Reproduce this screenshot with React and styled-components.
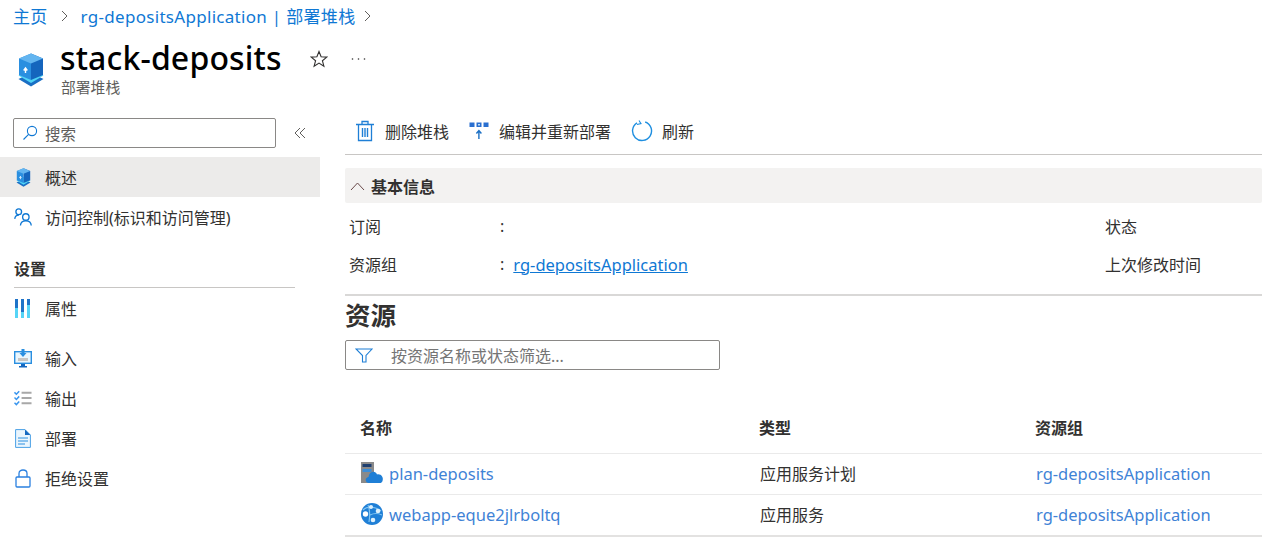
import React from 'react';
import styled, { createGlobalStyle } from 'styled-components';

const Global = createGlobalStyle`
  html, body {
    margin: 0;
    padding: 0;
    background: #fff;
    overflow: hidden;
    font-family: "Noto Sans", "Noto Sans CJK SC", sans-serif;
    color: #323130;
  }
`;

const Page = styled.div`
  width: 1262px;
  height: 550px;
  overflow: hidden;
`;

const Breadcrumb = styled.nav`
  display: flex;
  align-items: center;
  height: 31px;
  padding-left: 13px;
  font-size: 17px;
  color: #0f78d4;
  white-space: nowrap;
`;

const Crumb = styled.span`
  letter-spacing: 0.3px;
`;

const CrumbSep = styled.svg`
  width: 9px;
  height: 14px;
  margin: 0 ${p => p.$gap || 12}px;
  fill: none;
  stroke: #605e5c;
  stroke-width: 1;
`;

const TitleRow = styled.header`
  display: flex;
  height: 66px;
  margin-top: 4px;
  padding-left: 18px;
`;

const TitleIcon = styled.div`
  width: 26px;
  margin-top: 18px;
`;

const TitleText = styled.div`
  margin-left: 16px;
  width: 250px;
`;

const Title = styled.h1`
  margin: 0;
  font-size: 32px;
  font-weight: 500;
  line-height: 46px;
  letter-spacing: 0.15px;
  color: #000;
`;

const SubTitle = styled.div`
  font-size: 14.8px;
  line-height: 13px;
  color: #605e5c;
  margin-left: 1px;
`;

const TitleActions = styled.div`
  display: flex;
  align-items: flex-start;
  padding-top: 15px;
  gap: 23px;
`;

const Columns = styled.div`
  display: flex;
`;

const Sidebar = styled.aside`
  width: 320px;
  flex-shrink: 0;
  padding-top: 17px;
`;

const SearchRow = styled.div`
  display: flex;
  align-items: center;
  padding-left: 13px;
  height: 30px;
  margin-bottom: 9px;
`;

const SearchBox = styled.div`
  display: flex;
  align-items: center;
  gap: 7px;
  box-sizing: border-box;
  width: 263px;
  height: 30px;
  padding-left: 8px;
  border: 1px solid #8a8886;
  border-radius: 2px;
  font-size: 15.5px;
  color: #605e5c;
`;

const Collapse = styled.svg`
  width: 12px;
  height: 12px;
  margin-left: 18px;
  fill: none;
  stroke: #605e5c;
  stroke-width: 1;
`;

const NavItem = styled.div`
  display: flex;
  align-items: center;
  height: 40px;
  padding-left: 14px;
  gap: 13px;
  font-size: 16px;
  color: #323130;
  background: ${p => (p.$active ? '#ecebea' : 'transparent')};
  margin-bottom: ${p => p.$after || 0}px;
`;

const NavIcon = styled.div`
  width: 18px;
  height: 20px;
  display: flex;
  align-items: center;
  justify-content: center;
`;

const NavHeading = styled.div`
  margin: 20px 25px 0 14px;
  padding-bottom: 6px;
  border-bottom: 1px solid #c8c6c4;
  font-size: 16px;
  line-height: 24px;
  font-weight: 600;
  color: #323130;
`;

const Main = styled.main`
  flex: 1;
  margin-left: 25px;
  padding-top: 12px;
`;

const Toolbar = styled.div`
  display: flex;
  align-items: center;
  height: 35px;
  padding: 0 0 6px 10px;
  border-bottom: 1px solid #c8c6c4;
`;

const ToolButton = styled.div`
  display: flex;
  align-items: center;
  gap: ${p => p.$gap || 10}px;
  margin-right: ${p => p.$after || 20}px;
  font-size: 16px;
  color: #323130;
`;

const EssentialsBar = styled.div`
  display: flex;
  align-items: center;
  gap: 6px;
  height: 35px;
  margin-top: 13px;
  padding-left: 5px;
  background: #f3f2f1;
  border-radius: 2px;
  font-size: 16px;
  font-weight: 600;
  color: #323130;
`;

const EssentialsGrid = styled.div`
  display: grid;
  grid-template-columns: 151px 605px 1fr;
  grid-auto-rows: 38px;
  padding: 4px 0 11px 4px;
  border-bottom: 2px solid #d9d8d7;
  font-size: 16px;
  align-items: center;
`;

const Value = styled.div`
  display: flex;
  gap: 9px;
`;

const Link = styled.span`
  color: ${p => (p.$soft ? '#3f83d6' : '#0f78d4')};
  text-decoration: ${p => (p.$underline ? 'underline' : 'none')};
  font-size: 16.5px;
`;

const SectionTitle = styled.h2`
  margin: 0 0 6px;
  font-size: 25.5px;
  line-height: 38px;
  font-weight: 600;
  color: #323130;
`;

const Filter = styled.div`
  display: flex;
  align-items: center;
  box-sizing: border-box;
  width: 375px;
  height: 30px;
  padding-left: 9px;
  gap: 18px;
  border: 1px solid #8a8886;
  border-radius: 2px;
  font-size: 16px;
  color: #757575;
`;

const Table = styled.div`
  margin-top: 35px;
`;

const Row = styled.div`
  display: grid;
  grid-template-columns: 399px 276px 1fr;
  align-items: center;
  height: ${p => (p.$head ? 43 : 38)}px;
  padding-left: 15px;
  padding-bottom: ${p => (p.$head ? 5 : 2)}px;
  border-bottom: ${p => (p.$last ? '2px solid #e3e2e1' : '1px solid #eaeaea')};
  font-size: 16px;
  color: #323130;
  font-weight: ${p => (p.$head ? 600 : 400)};

  & > :not(:first-child) {
    margin-left: ${p => (p.$head ? 0 : 1)}px;
  }
`;

const NameCell = styled.div`
  display: flex;
  align-items: center;
  gap: 5px;
`;

const Icon24 = styled.svg`
  display: block;
  flex-shrink: 0;
`;

const Box = ({ width = 26, height = 34 }) => (
  <Icon24 width={width} height={height} viewBox="0 0 26 34">
    <path d="M13 20 L25.5 26 L13 33.5 L0.5 26Z" fill="#1a6fc4" />
    <path d="M13 16 L25.5 22.5 L13 30 L0.5 22.5Z" fill="#50d4f5" />
    <path d="M13 0.5 L25 5.5 V22 L13 27Z" fill="#1565bd" />
    <path d="M13 0.5 L1 5.5 V22 L13 27Z" fill="#2a8fe0" />
    <path d="M13 0.5 L25 5.5 L13 10.5 L1 5.5Z" fill="#63b5f0" />
    <path d="M7.5 20 V15.5 M5.7 17.5 L7.5 15 L9.3 17.5" stroke="#fff" strokeWidth="1.4" fill="none" />
  </Icon24>
);

const App = () => (
  <Page>
    <Global />
    <Breadcrumb>
      <Crumb>主页</Crumb>
      <CrumbSep viewBox="0 0 9 14"><path d="M2 2 L7 7 L2 12" /></CrumbSep>
      <Crumb>rg-depositsApplication | 部署堆栈</Crumb>
      <CrumbSep $gap={8} viewBox="0 0 9 14"><path d="M2 2 L7 7 L2 12" /></CrumbSep>
    </Breadcrumb>
    <TitleRow>
      <TitleIcon><Box /></TitleIcon>
      <TitleText>
        <Title>stack-deposits</Title>
        <SubTitle>部署堆栈</SubTitle>
      </TitleText>
      <TitleActions>
        <svg width="18" height="18" viewBox="0 0 18 18" fill="none" stroke="#323130" strokeWidth="1.1">
          <path d="M9 1.5 L11.1 6.8 L16.8 7.1 L12.4 10.7 L13.9 16.2 L9 13.1 L4.1 16.2 L5.6 10.7 L1.2 7.1 L6.9 6.8Z" />
        </svg>
        <svg width="16" height="18" viewBox="0 0 16 18" fill="#323130">
          <circle cx="1.5" cy="9" r="0.8" /><circle cx="7.5" cy="9" r="0.8" /><circle cx="13.5" cy="9" r="0.8" />
        </svg>
      </TitleActions>
    </TitleRow>
    <Columns>
      <Sidebar>
        <SearchRow>
          <SearchBox>
            <svg width="16" height="16" viewBox="0 0 16 16" fill="none" stroke="#0f78d4" strokeWidth="1.1">
              <circle cx="10" cy="6" r="4.6" /><path d="M6.6 9.4 L1.5 14.5" />
            </svg>
            搜索
          </SearchBox>
          <Collapse viewBox="0 0 12 12"><path d="M6 1 L1 6 L6 11 M11 1 L6 6 L11 11" /></Collapse>
        </SearchRow>
        <NavItem $active>
          <NavIcon><Box width={15} height={19} /></NavIcon>概述
        </NavItem>
        <NavItem $after={1}>
          <NavIcon>
            <svg width="19" height="20" viewBox="0 0 19 20" fill="none" stroke="#0f78d4" strokeWidth="1.4">
              <circle cx="5" cy="4.5" r="3" /><path d="M0.8 12 C1 9.5 3 8 5.2 8" />
              <circle cx="12.5" cy="10" r="3.4" /><path d="M6.8 19 C7 15.5 9.5 14 12.5 14 C15.5 14 18 15.5 18.2 19" />
            </svg>
          </NavIcon>
          访问控制(标识和访问管理)
        </NavItem>
        <NavHeading>设置</NavHeading>
        <NavItem $after={10}>
          <NavIcon>
            <svg width="16" height="19" viewBox="0 0 16 19">
              <rect x="0" width="3" height="19" fill="#56d4f6" /><rect x="0" width="3" height="9" fill="#1e73c8" />
              <rect x="6" width="3" height="19" fill="#56d4f6" /><rect x="6" width="3" height="13" fill="#1e73c8" />
              <rect x="12" width="3" height="19" fill="#56d4f6" /><rect x="12" width="3" height="6" fill="#1e73c8" />
            </svg>
          </NavIcon>
          属性
        </NavItem>
        <NavItem>
          <NavIcon>
            <svg width="18" height="19" viewBox="0 0 18 19">
              <rect x="0.7" y="2.7" width="16.6" height="11.6" fill="#eaf6fd" stroke="#2a8fe0" strokeWidth="1.4" />
              <rect x="4" y="9" width="10" height="3" fill="#c8c6c4" />
              <path d="M7.5 0 H10.5 V4 H12.5 L9 8 L5.5 4 H7.5Z" fill="#2a8fe0" />
              <path d="M7 15 H11 V17 H13 V18.5 H5 V17 H7Z" fill="#1568c0" />
            </svg>
          </NavIcon>
          输入
        </NavItem>
        <NavItem>
          <NavIcon>
            <svg width="19" height="16" viewBox="0 0 19 16" fill="none">
              <path d="M0.5 2 L2.5 4 L5.5 0.8 M0.5 7.5 L2.5 9.5 L5.5 6.3 M0.5 13 L2.5 15 L5.5 11.8" stroke="#3a96ee" strokeWidth="1.6" />
              <path d="M8 2.5 H18.5 M8 8 H18.5 M8 13.5 H18.5" stroke="#a8a8a8" strokeWidth="2" />
            </svg>
          </NavIcon>
          输出
        </NavItem>
        <NavItem>
          <NavIcon>
            <svg width="16" height="19" viewBox="0 0 16 19">
              <path d="M0.6 0.6 H10 L15.4 6 V18.4 H0.6Z" fill="#eaf5fd" stroke="#4aa0e6" strokeWidth="1" />
              <path d="M10 0.6 L15.4 6 H10Z" fill="#1568c0" />
              <path d="M3 9 H13 M3 12 H13 M3 15 H10" stroke="#2a8fe0" strokeWidth="1" />
            </svg>
          </NavIcon>
          部署
        </NavItem>
        <NavItem>
          <NavIcon>
            <svg width="16" height="19" viewBox="0 0 16 19" fill="none" stroke="#2a80e0" strokeWidth="1.3">
              <rect x="1" y="8" width="14" height="10" rx="1" /><path d="M4 8 V4.5 C4 2 6 1 8 1 C10 1 12 2 12 4.5 V8" />
            </svg>
          </NavIcon>
          拒绝设置
        </NavItem>
      </Sidebar>
      <Main>
        <Toolbar>
          <ToolButton>
            <svg width="20" height="22" viewBox="0 0 20 22" fill="none" stroke="#1f7fd6" strokeWidth="1.3">
              <path d="M1 4.5 H19 M7 4.5 V1.5 H13 V4.5 M3.5 4.5 V20.5 H16.5 V4.5" />
              <path d="M7.5 8 V17 M10 8 V17 M12.5 8 V17" strokeWidth="1.4" />
            </svg>
            删除堆栈
          </ToolButton>
          <ToolButton>
            <svg width="20" height="20" viewBox="0 0 20 20">
              <rect x="0.5" y="1.5" width="5" height="4.5" fill="#2a6fd0" /><rect x="7.5" y="1.5" width="5" height="4.5" fill="#2a6fd0" /><rect x="9" y="3" width="2" height="1.5" fill="#bfe0f8" /><rect x="14.5" y="1.5" width="5" height="4.5" fill="#2a6fd0" />
              <path d="M9.9 18 V10 M7.4 12.5 L9.9 9.5 L12.4 12.5" stroke="#1a6fc4" strokeWidth="1.4" fill="none" />
            </svg>
            编辑并重新部署
          </ToolButton>
          <ToolButton $gap={9}>
            <svg width="22" height="22" viewBox="0 0 22 22" fill="none" stroke="#1f8fe0" strokeWidth="1.4">
              <path d="M14.2 2 A9.5 9.5 0 1 1 6 2.9" /><path d="M8 0.5 L10 3.6 L6 4.5" strokeWidth="1.1" />
            </svg>
            刷新
          </ToolButton>
        </Toolbar>
        <EssentialsBar>
          <svg width="15" height="10" viewBox="0 0 15 10" fill="none" stroke="#6a4a4a" strokeWidth="1">
            <path d="M1 9 L7.5 2 L14 9" />
          </svg>
          基本信息
        </EssentialsBar>
        <EssentialsGrid>
          <div>订阅</div>
          <Value>:</Value>
          <div>状态</div>
          <div>资源组</div>
          <Value>: <Link $underline>rg-depositsApplication</Link></Value>
          <div>上次修改时间</div>
        </EssentialsGrid>
        <SectionTitle>资源</SectionTitle>
        <Filter>
          <svg width="18" height="15" viewBox="0 0 18 15" fill="none" stroke="#1f7fd6" strokeWidth="1.1">
            <path d="M1 1 H17 L11 7.5 V14 H7.5 V7.5Z" />
          </svg>
          按资源名称或状态筛选...
        </Filter>
        <Table>
          <Row $head>
            <div>名称</div>
            <div>类型</div>
            <div>资源组</div>
          </Row>
          <Row>
            <NameCell>
              <svg width="24" height="24" viewBox="0 0 24 24">
                <rect x="1" y="1" width="13" height="21" fill="#8a8a8a" />
                <rect x="2.5" y="3" width="9" height="3" fill="#1e3f70" /><rect x="2.5" y="8" width="9" height="3" fill="#3c8ed8" />
                <path d="M9 22 C5 22 4.5 16.5 8.5 16 C9 10.5 15.5 9 17 13.5 C21 12.5 24 16.5 22.5 20 C22 21.5 21 22 20 22Z" fill="#1f7fd6" />
              </svg>
              <Link $soft>plan-deposits</Link>
            </NameCell>
            <div>应用服务计划</div>
            <Link $soft>rg-depositsApplication</Link>
          </Row>
          <Row $last>
            <NameCell>
              <svg width="24" height="24" viewBox="0 0 24 24">
                <circle cx="12" cy="12" r="11" fill="#1f7fd6" />
                <path d="M3 8 C8 3 16 5 21 9 M8 3 C10 8 10 14 9 20 M10 13 C14 11 18 11 22 13" stroke="#7fc4f2" strokeWidth="1.2" fill="none" />
                <circle cx="5.5" cy="12" r="2.7" fill="#fff" /><circle cx="13" cy="18" r="2.3" fill="#dff1fc" /><circle cx="18" cy="9" r="2.3" fill="#dff1fc" /><circle cx="11" cy="5" r="2" fill="#dff1fc" />
              </svg>
              <Link $soft>webapp-eque2jlrboltq</Link>
            </NameCell>
            <div>应用服务</div>
            <Link $soft>rg-depositsApplication</Link>
          </Row>
        </Table>
      </Main>
    </Columns>
  </Page>
);

export default App;
